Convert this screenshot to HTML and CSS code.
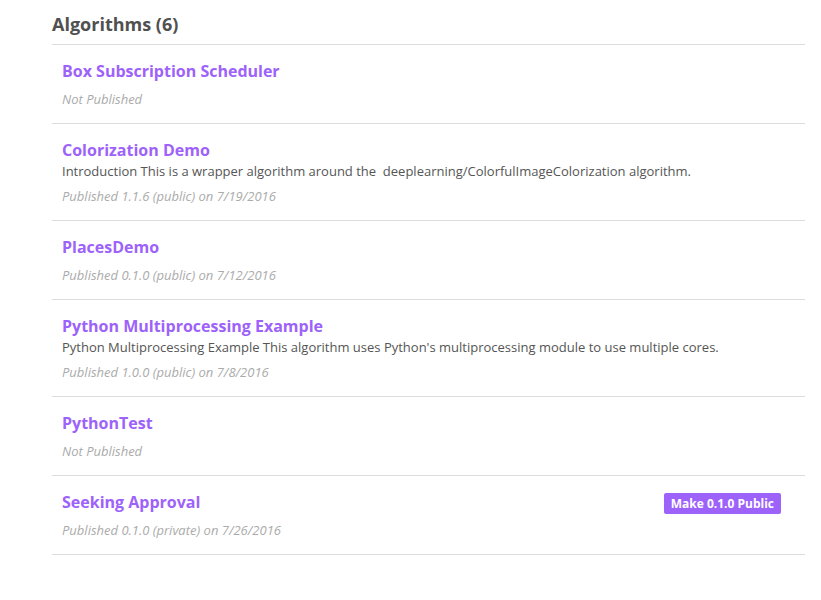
FILE: index.html
```html
<!DOCTYPE html>
<html>
<head>
<meta charset="utf-8">
<link rel="stylesheet" href="styles.css">
</head>
<body>
<section class="algos">
  <h2 class="algos-title">Algorithms (6)</h2>
  <ul class="algo-list">
    <li class="algo">
      <div class="algo-main">
        <a class="algo-name">Box Subscription Scheduler</a>
        <div class="algo-meta">Not Published</div>
      </div>
    </li>
    <li class="algo">
      <div class="algo-main">
        <a class="algo-name">Colorization Demo</a>
        <div class="algo-desc">Introduction This is a wrapper algorithm around the&nbsp; deeplearning/ColorfulImageColorization algorithm.</div>
        <div class="algo-meta">Published 1.1.6 (public) on 7/19/2016</div>
      </div>
    </li>
    <li class="algo">
      <div class="algo-main">
        <a class="algo-name">PlacesDemo</a>
        <div class="algo-meta">Published 0.1.0 (public) on 7/12/2016</div>
      </div>
    </li>
    <li class="algo">
      <div class="algo-main">
        <a class="algo-name">Python Multiprocessing Example</a>
        <div class="algo-desc">Python Multiprocessing Example This algorithm uses Python's multiprocessing module to use multiple cores.</div>
        <div class="algo-meta">Published 1.0.0 (public) on 7/8/2016</div>
      </div>
    </li>
    <li class="algo">
      <div class="algo-main">
        <a class="algo-name">PythonTest</a>
        <div class="algo-meta">Not Published</div>
      </div>
    </li>
    <li class="algo">
      <div class="algo-main">
        <a class="algo-name">Seeking Approval</a>
        <div class="algo-meta">Published 0.1.0 (private) on 7/26/2016</div>
      </div>
      <button class="publish-btn">Make 0.1.0 Public</button>
    </li>
  </ul>
</section>
</body>
</html>
```
FILE: styles.css
```css
html, body {
  margin: 0;
  padding: 0;
  background: #fff;
  font-family: "Open Sans", "Liberation Sans", sans-serif;
}
.algos {
  margin-left: 52px;
  width: 753px;
  padding-top: 10px;
}
.algos-title {
  margin: 0;
  font-size: 18px;
  line-height: 28px;
  font-weight: 700;
  color: #505050;
  padding-bottom: 6px;
  border-bottom: 1px solid #dcdcdc;
}
.algo-list {
  list-style: none;
  margin: 0;
  padding: 0;
}
.algo {
  display: flex;
  align-items: flex-start;
  justify-content: space-between;
  padding: 15px 24px 14px 10px;
  border-bottom: 1px solid #dcdcdc;
}
.algo-name {
  display: block;
  font-size: 16px;
  line-height: 22px;
  font-weight: 700;
  color: #9d62fa;
  cursor: pointer;
}
.algo-desc {
  font-size: 13px;
  line-height: 20px;
  color: #555;
}
.algo-meta {
  margin-top: 7px;
  font-size: 13px;
  line-height: 20px;
  font-style: italic;
  color: #ababab;
}
.algo-desc + .algo-meta {
  margin-top: 5px;
}
.publish-btn {
  margin-top: 2px;
  border: none;
  border-radius: 2px;
  background: #9d62fa;
  color: #fff;
  font-family: "Open Sans", "Liberation Sans", sans-serif;
  font-size: 12px;
  font-weight: 700;
  line-height: 21px;
  height: 21px;
  padding: 0 7px;
}
```
